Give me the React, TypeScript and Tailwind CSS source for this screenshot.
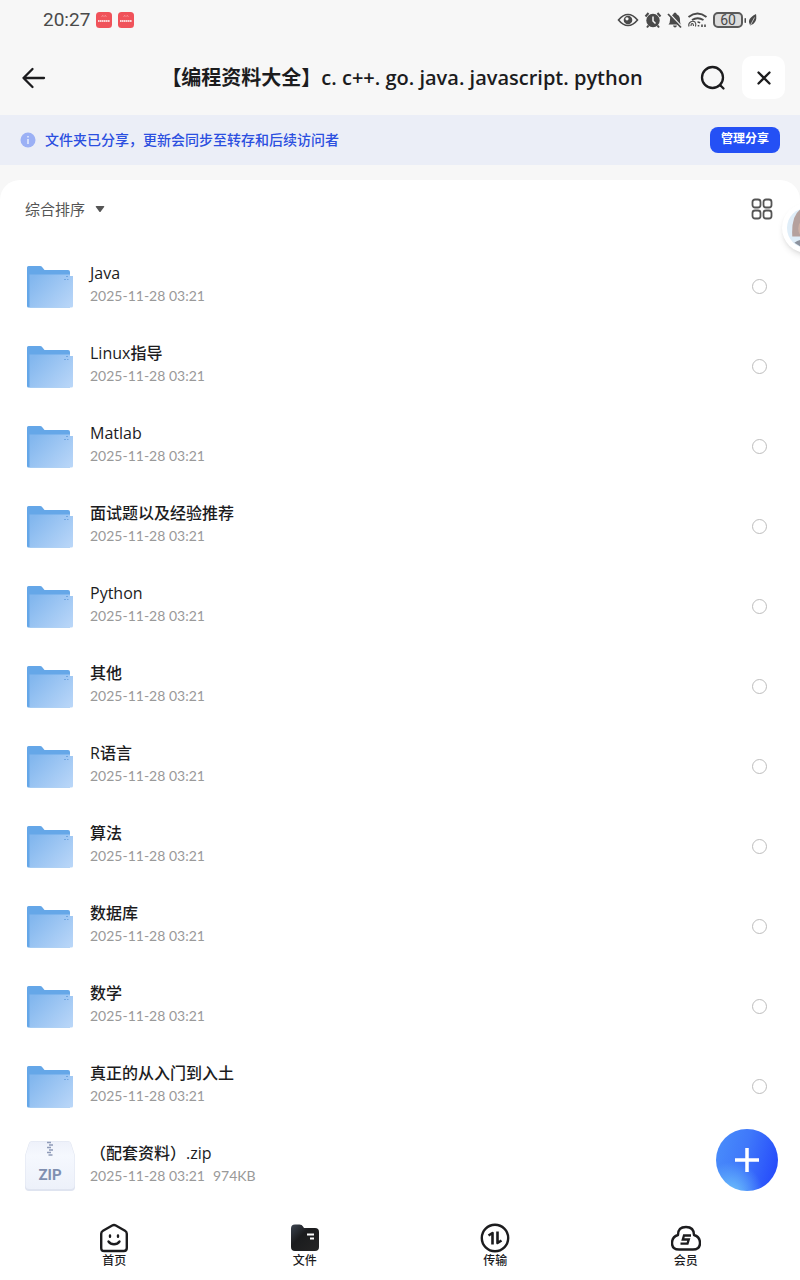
import React from 'react';

const files = [
  { name: 'Java', date: '2025-11-28 03:21' },
  { name: 'Linux指导', date: '2025-11-28 03:21' },
  { name: 'Matlab', date: '2025-11-28 03:21' },
  { name: '面试题以及经验推荐', date: '2025-11-28 03:21' },
  { name: 'Python', date: '2025-11-28 03:21' },
  { name: '其他', date: '2025-11-28 03:21' },
  { name: 'R语言', date: '2025-11-28 03:21' },
  { name: '算法', date: '2025-11-28 03:21' },
  { name: '数据库', date: '2025-11-28 03:21' },
  { name: '数学', date: '2025-11-28 03:21' },
  { name: '真正的从入门到入土', date: '2025-11-28 03:21' },
  { name: '（配套资料）.zip', date: '2025-11-28 03:21', size: '974KB' },
];

const FolderIcon = () => (
  <svg viewBox="0 0 50 50" className="h-[50px] w-[50px] shrink-0" aria-hidden="true">
    <defs>
      <linearGradient id="folder-front" x1="0" y1="0.2" x2="1" y2="0.9">
        <stop offset="0" stopColor="#83b7ee" />
        <stop offset="1" stopColor="#b9d6f8" />
      </linearGradient>
    </defs>
    <path d="M2 6.500Q2 5 3.500 5H15q1.500 0 2.300 1.200L19.500 9H43q2 0 2 2v35.500H3.500Q2 46.500 2 45Z" fill="#65a7e8" />
    <path d="M4.500 13.500H45V15h3v30q0 1.500-1.500 1.500H4.500Z" fill="url(#folder-front)" />
    <path d="M41 15.500h2M39 18.500h2M42 18.500h1.500" stroke="#6fa6e2" strokeWidth="1" />
  </svg>
);

const ZipIcon = () => (
  <svg viewBox="0 0 50 50" className="h-[50px] w-[50px] shrink-0" aria-hidden="true">
    <defs>
      <linearGradient id="zip-body" x1="0" y1="0" x2="0" y2="1">
        <stop offset="0" stopColor="#eef1fa" />
        <stop offset="0.300" stopColor="#f5f8fe" />
        <stop offset="1" stopColor="#edf1fa" />
      </linearGradient>
    </defs>
    <path d="M7 0h36q2.500 0 3.200 2.500L49.500 13q.5 1.500.5 3v30q0 4-4 4H4q-4 0-4-4V16q0-1.500.5-3L3.800 2.500Q4.500 0 7 0Z" fill="#dfe4f0" />
    <path d="M7 .5h36q2 0 2.800 2.300L49 13q.5 1.500.5 3v28q0 4-4 4h-41q-4 0-4-4V16q0-1.500.5-3L4.200 2.800Q5 .5 7 .5Z" fill="url(#zip-body)" />
    <path d="M22 1.500h4M24 4h4M22 6.500h4M24 9h4M22 11.500h4M23.500 14h4" stroke="#8f9bb8" strokeWidth="1.500" />
    <text x="25" y="39" textAnchor="middle" className="fill-[#7f8fb0] font-['Roboto',sans-serif] text-[15px] font-bold">ZIP</text>
  </svg>
);

const HomeIcon = () => (
  <svg viewBox="0 0 30 30" className="h-[30px] w-[30px]" fill="none" stroke="#1c1c1e" strokeWidth="2.400" strokeLinecap="round" strokeLinejoin="round" aria-hidden="true">
    <path d="M13.200 2.500q1.800-1 3.600 0l9.200 5.300q1.800 1 1.800 3V25q0 3-3 3H5.200q-3 0-3-3V10.800q0-2 1.800-3Z" />
    <path d="M11 12.500v1.300M19 12.500v1.300M9.500 18.500q2 2.800 5.500 2.800t5.500-2.800" />
  </svg>
);

const FilesIcon = () => (
  <svg viewBox="0 0 30 30" className="h-[30px] w-[30px]" aria-hidden="true">
    <defs>
      <linearGradient id="files-fill" x1="0" y1="0" x2="1" y2="1">
        <stop offset="0" stopColor="#3c4450" />
        <stop offset="0.400" stopColor="#1b1c1e" />
        <stop offset="1" stopColor="#252525" />
      </linearGradient>
    </defs>
    <path d="M1 5.500Q1 1.500 5 1.500h4.500Q12 1.500 13 3.500l1 1.500H25q4 0 4 4v15q0 4-4 4H5q-4 0-4-4Z" fill="url(#files-fill)" />
    <path d="M17 11.500h7M20 15.500h4" stroke="#fff" strokeWidth="2.200" />
  </svg>
);

const TransferIcon = () => (
  <svg viewBox="0 0 30 30" className="h-[30px] w-[30px]" fill="none" stroke="#1c1c1e" aria-hidden="true">
    <circle cx="15" cy="15" r="13.200" strokeWidth="2.400" />
    <path d="M8.500 12.500 12.500 10v11.500" strokeWidth="2.600" strokeLinejoin="round" />
    <path d="M21.500 17.500 17.500 20V8.500" strokeWidth="2.600" strokeLinejoin="round" />
  </svg>
);

const MemberIcon = () => (
  <svg viewBox="0 0 30 30" className="h-[30px] w-[30px]" fill="none" stroke="#1c1c1e" strokeWidth="2.400" strokeLinejoin="round" aria-hidden="true">
    <path d="M7 12Q7 4 15 4t8 8q6 1.800 6 8 0 6.500-7 6.500H8Q1 26.500 1 20q0-6.200 6-8Z" />
    <path d="M20 12.500h-7l-1.200 4h6l-1.300 4.200H9.500" strokeWidth="2.300" strokeLinejoin="miter" />
  </svg>
);

const tabs = [
  { label: '首页', icon: HomeIcon },
  { label: '文件', icon: FilesIcon },
  { label: '传输', icon: TransferIcon },
  { label: '会员', icon: MemberIcon },
];

const NoticeBadge = () => (
  <svg viewBox="0 0 16 16" className="h-4 w-4" aria-hidden="true">
    <rect width="16" height="16" rx="3.500" fill="#f0525a" />
    <path d="M5.500 4.500 7 3.500l1 1 1-1 1.500 1" fill="none" stroke="#f9a5a8" strokeWidth="0.800" />
    <path d="M2 9h12" stroke="#fff" strokeWidth="1.500" strokeDasharray="1.600 .4" />
  </svg>
);

const StatusIcons = () => (
  <div className="flex items-center text-[#4a4a4a]">
    <svg viewBox="0 0 96 20" className="h-5 w-24" fill="none" stroke="currentColor" aria-hidden="true">
      {/* 护眼 */}
      <path d="M1.500 10Q6 4.500 11 4.500T20.500 10Q16 15.500 11 15.500T1.500 10Z" strokeWidth="1.600" />
      <circle cx="11" cy="10" r="4.300" fill="currentColor" stroke="none" />
      <circle cx="10" cy="8.800" r="1.600" fill="#f7f7f7" stroke="none" />
      {/* 闹钟 */}
      <circle cx="36" cy="10.500" r="6.700" fill="currentColor" stroke="none" />
      <path d="m28.500 6.500 3-3.500M43.500 6.500l-3-3.500M31.500 15.500 30 17.500M40.500 15.500l1.500 2" strokeWidth="2" />
      <path d="M36 6.500V11l2.500 2.500" stroke="#f7f7f7" strokeWidth="1.500" />
      {/* 静音 */}
      <path d="M51.500 14.500q1.500-1.500 1.500-4.500 0-4.500 3-5.500 1-2 2-2t2 2q3 1 3 5.500t1.500 4.500ZM56 15.500h4q-.5 2-2 2t-2-2Z" fill="currentColor" stroke="none" />
      <path d="m51.500 2.500 13 14" stroke="#f7f7f7" strokeWidth="1.500" />
      <path d="m51 4 13 13.500" strokeWidth="1.800" />
      {/* 无线网络 */}
      <path d="M71.500 7q9-7 18 0M75 10q5.500-3.500 11.500 0" strokeWidth="1.900" />
      <path d="M72 16.500q-1-3 1.500-4.500t4.500 0q1.500 2 .5 4.500M74 16q0-2.500 1.200-2.500t1.300 2.500" strokeWidth="1.100" />
      <path d="M80.500 12q1.500 0 2.500 1M81.500 15v1.500M85 14.500v2.500M88 14.500v2.500" strokeWidth="1.600" />
    </svg>
    <div className="flex h-4 w-[30px] items-center justify-center rounded-[5px] border-2 border-[#5a5a5a] bg-[#dcdcdc] font-['Roboto',sans-serif] text-sm leading-none">60</div>
    <svg viewBox="0 0 16 20" className="h-5 w-4" fill="currentColor" aria-hidden="true">
      <rect x="1.500" y="8" width="1.500" height="5" rx=".7" />
      <path d="M7 15q-2.500-4.500 1-7.500Q10 5 13 4q1 5-1 8t-4 3l-.5 1Z" />
      <path d="m7 16 4.500-8.500" stroke="#f7f7f7" strokeWidth=".7" />
    </svg>
  </div>
);

const App: React.FC = () => {
  return (
    <div className="relative flex min-h-screen flex-col overflow-x-hidden bg-[#f7f7f7] font-['Open_Sans','Noto_Sans_CJK_SC',sans-serif] text-[#1c1c1e]">
      {/* 状态栏 */}
      <div className="flex h-10 items-center justify-between pr-[41px] pl-[43px]">
        <div className="flex items-center gap-[6px]">
          <span className="font-['Roboto',sans-serif] text-[19px] text-[#4a4a4a]">20:27</span>
          <NoticeBadge />
          <NoticeBadge />
        </div>
        <StatusIcons />
      </div>

      {/* 标题栏 */}
      <header className="flex h-[75px] items-center pr-[15px] pl-5">
        <button type="button" aria-label="返回" className="w-[84px]">
          <svg viewBox="0 0 28 28" className="h-7 w-7" fill="none" stroke="currentColor" strokeWidth="2.300" strokeLinecap="round" strokeLinejoin="round" aria-hidden="true">
            <path d="M24 14H3.500M12.500 5l-9 9 9 9" />
          </svg>
        </button>
        <h1 className="flex-1 truncate text-center text-xl font-semibold">【编程资料大全】c. c++. go. java. javascript. python</h1>
        <div className="flex items-center gap-4">
          <button type="button" aria-label="搜索">
            <svg viewBox="0 0 26 26" className="h-[26px] w-[26px]" fill="none" stroke="currentColor" strokeWidth="2.300" strokeLinecap="round" aria-hidden="true">
              <circle cx="12.500" cy="12.500" r="10.500" />
              <path d="m20.500 20.500 3 3" />
            </svg>
          </button>
          <button type="button" aria-label="关闭" className="flex h-[43px] w-[43px] items-center justify-center rounded-[10px] bg-white">
            <svg viewBox="0 0 14 14" className="h-[14px] w-[14px]" fill="none" stroke="currentColor" strokeWidth="2.300" strokeLinecap="round" aria-hidden="true">
              <path d="m1.500 1.500 11 11M12.500 1.500l-11 11" />
            </svg>
          </button>
        </div>
      </header>

      {/* 分享提示 */}
      <div className="flex h-[50px] items-center bg-[#ebeef7] px-5">
        <svg viewBox="0 0 16 16" className="mr-[9px] h-4 w-4" aria-hidden="true">
          <circle cx="8" cy="8" r="7.500" fill="#9bb0f5" />
          <path d="M8 4v1.600M8 7v5" stroke="#e4eafd" strokeWidth="1.600" />
        </svg>
        <p className="flex-1 text-sm font-medium text-[#2b4fe0]">文件夹已分享，更新会同步至转存和后续访问者</p>
        <button type="button" className="h-[26px] w-[70px] rounded-lg bg-[#2450f5] pb-0.5 text-xs font-bold text-white">管理分享</button>
      </div>

      {/* 文件列表 */}
      <main className="mt-[15px] flex-1 rounded-t-[20px] bg-white">
        <div className="flex h-[66px] items-start justify-between pt-[18px] pr-[27px] pl-[25px]">
          <button type="button" className="flex items-center gap-[10px] text-[15px] leading-[22px] text-[#555]">
            综合排序
            <svg viewBox="0 0 10 8" className="h-2 w-[10px]" fill="currentColor" aria-hidden="true">
              <path d="M1.500 1h7q1.300 0 .6 1L5.800 6.400q-.8 1-1.600 0L.9 2q-.7-1 .6-1Z" />
            </svg>
          </button>
          <button type="button" aria-label="网格视图">
            <svg viewBox="0 0 22 22" className="h-[22px] w-[22px]" fill="none" stroke="#555" strokeWidth="1.800" aria-hidden="true">
              <rect x="1.500" y="1.500" width="8" height="8" rx="2.500" />
              <rect x="12.500" y="1.500" width="8" height="8" rx="2.500" />
              <rect x="1.500" y="12.500" width="8" height="8" rx="2.500" />
              <rect x="12.500" y="12.500" width="8" height="8" rx="2.500" />
            </svg>
          </button>
        </div>

        <ul>
          {files.map((file) => (
            <li key={file.name}>
              <label className="flex h-20 items-center pr-[33px] pl-[25px]">
                {file.size ? <ZipIcon /> : <FolderIcon />}
                <span className="ml-[15px] flex-1 pb-1">
                  <span className="block text-base leading-6 font-medium">{file.name}</span>
                  <span className="block font-['Lato',sans-serif] text-sm leading-[22px] text-[#999]">
                    {file.date}
                    {file.size && <span className="ml-2">{file.size}</span>}
                  </span>
                </span>
                {!file.size && <input type="checkbox" className="h-[15px] w-[15px] appearance-none rounded-full border border-[#bdbdbd] checked:bg-[#2450f5]" />}
              </label>
            </li>
          ))}
        </ul>
      </main>

      {/* 底部导航 */}
      <nav className="flex h-[74px] bg-white px-[19px] pt-[17px]">
        {tabs.map((tab) => (
          <button key={tab.label} type="button" className="flex flex-1 flex-col items-center">
            <tab.icon />
            <span className="text-xs leading-4 font-medium">{tab.label}</span>
          </button>
        ))}
      </nav>

      {/* 悬浮头像 */}
      <button type="button" aria-label="助手" className="absolute top-[203px] -right-[32px] h-[50px] w-[50px] rounded-full bg-white p-[5px] shadow-md">
        <svg viewBox="0 0 38 38" className="h-full w-full" aria-hidden="true">
          <circle cx="19" cy="19" r="19" fill="#dfedf8" />
          <path d="M5 27Q4 8 12 2h14v25Z" fill="#b5a19d" />
          <path d="M11 22q-1-6 2-9h13v12H12Z" fill="#cdb0a4" />
          <path d="M7 33q4-3 8-3h11v8H15Z" fill="#8c929d" />
        </svg>
      </button>

      {/* 新建 */}
      <button type="button" aria-label="新建" className="absolute right-[22px] bottom-[89px] flex h-[62px] w-[62px] items-center justify-center rounded-full bg-[radial-gradient(circle_at_25%_105%,#6fc4fb_0%,#6fc4fb00_40%),linear-gradient(105deg,#4a8ffb_0%,#3f78fa_45%,#2448fb_95%)]">
        <svg viewBox="0 0 24 24" className="h-6 w-6" stroke="#fff" strokeWidth="3.500" aria-hidden="true">
          <path d="M12 0v24M0 12h24" />
        </svg>
      </button>
    </div>
  );
};

export default App;
